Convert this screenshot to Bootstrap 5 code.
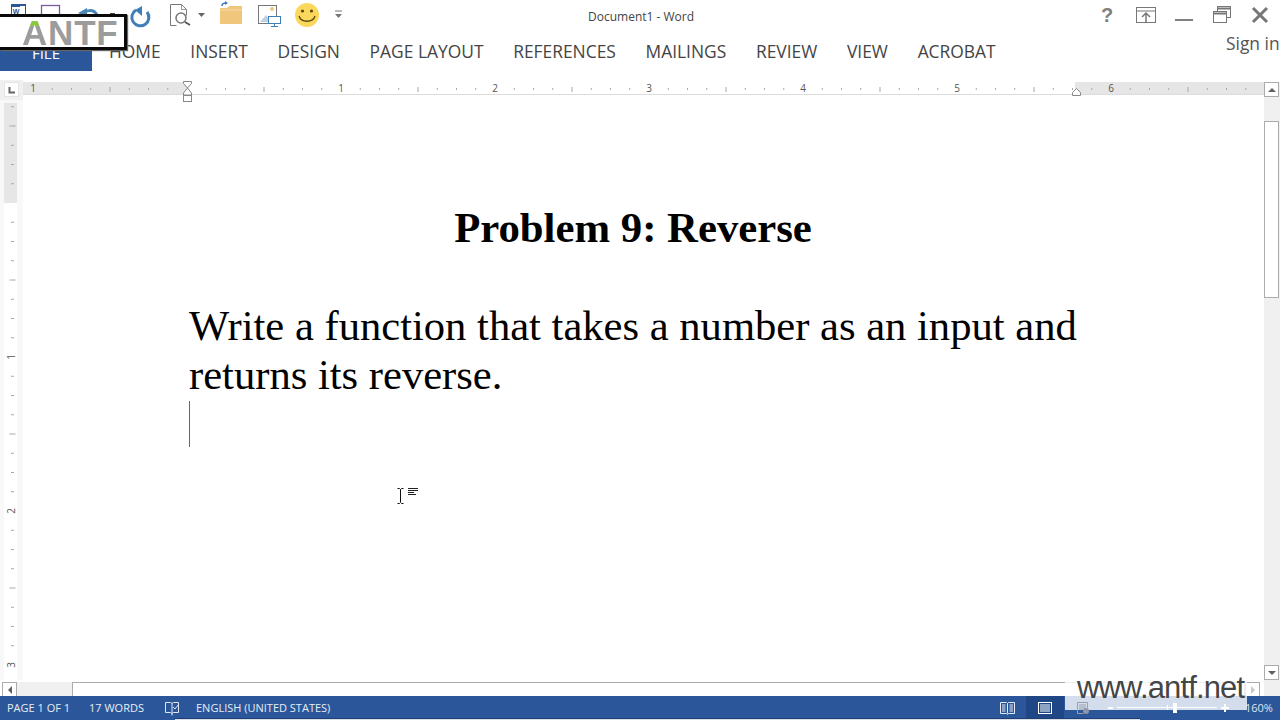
<!DOCTYPE html>
<html lang="en">
<head>
<meta charset="utf-8">
<title>Document1 - Word</title>
<link href="https://cdn.jsdelivr.net/npm/bootstrap@5.3.0/dist/css/bootstrap.min.css" rel="stylesheet">
<style>
html,body{height:720px;overflow:hidden}
body{width:1280px;font-family:"Open Sans","Liberation Sans",sans-serif;color:#444;background:#fff;position:relative}
.qat-row{height:32px}
.qat-ico{display:block;position:absolute;top:0}
.qat-wrap{position:relative;width:360px;height:32px}
.doc-title{font-size:12px;color:#444;left:588px;top:8px;line-height:17px;position:absolute}
.win-wrap{position:absolute;left:1090px;top:0;width:190px;height:32px}
.tab-row{height:39px;position:relative}
.file-tab{width:92px;height:39px;background:#2b579a;color:#fff;font-size:15px;line-height:43px;text-align:center;margin-right:17px}
.tab-item{font-size:17.4px;color:#444;margin-right:29.7px;line-height:38px;white-space:nowrap}
.signin{position:absolute;left:1226px;top:-1px;font-size:17.4px;color:#555;line-height:24px;white-space:nowrap}
.gap-strip{height:11px}
.main-area{height:614px}
.left-col{width:1264px}
.ruler-row{height:12px;position:relative;z-index:2}
.ruler-svg{display:block;position:absolute;left:0;top:-2px;overflow:visible}
.ruler-num{font:10px "Open Sans",sans-serif;fill:#555;text-anchor:middle}
.doc-row{height:586px}
.vruler-col{width:23px;background:#f8f8f8}
.page-col{padding:109px 0 0 166px;background:#fff}
.doc-text{width:888px;font-family:"Liberation Serif","Times New Roman",serif;line-height:49px;color:#000}
.doc-head{font-size:42.75px;font-weight:700;text-align:center;margin:0 0 49px;line-height:49px}
.doc-body{font-size:42.6px;margin:0;width:900px}
.caret-line{width:1px;height:46px;background:#666;margin-top:2px}
.vscroll-col{width:16px;background:#f0f0f0}
.scr-btn{flex:none;width:15px;height:15px;background:#fff;border:1px solid #ababab;display:flex;align-items:center;justify-content:center}
.tri-up{width:0;height:0;border:4px solid transparent;border-top:0;border-bottom:4px solid #606060}
.tri-down{width:0;height:0;border:4px solid transparent;border-bottom:0;border-top:4px solid #606060}
.tri-left{width:0;height:0;border:4px solid transparent;border-left:0;border-right:4px solid #606060}
.tri-right{width:0;height:0;border:4px solid transparent;border-right:0;border-left:4px solid #c8c8c8}
.vthumb{flex:none;width:15px;height:177px;background:#fff;border:1px solid #ababab;margin-top:24px}
.hscroll-row{height:16px;padding:2px 0 0 2px}
.htrack{flex:none;width:55px;height:15px;background:#f0f0f0}
.hthumb{flex:none;background:#fff;border:1px solid #ababab;height:15px;width:1173px}
.status-row{height:24px;background:#2b579a;color:#e8edf5;font-size:11px;position:relative}
.st-item{position:absolute;top:0;line-height:24px;white-space:nowrap}
.st-ico{position:absolute;top:0;display:block}
.st-active{position:absolute;left:1026px;top:0;width:38px;height:24px;background:#1f4785}
.watermark{position:absolute;left:1065px;top:677px;width:182px;height:33px;background:rgba(255,255,255,.8);z-index:4}
.watermark-text{position:absolute;left:1077px;top:669px;font-family:"Liberation Sans",sans-serif;font-size:31px;line-height:38px;color:#454545;letter-spacing:-.85px;z-index:5;white-space:nowrap}
.logo-box{position:absolute;left:0;top:14px;width:127px;height:36px;border:3px solid #0a0a0a;border-left:0;background:#fff;z-index:6;font-family:"Liberation Sans",sans-serif;font-size:35px;font-weight:700;line-height:31px;color:#9c9c9c;padding-left:22px;letter-spacing:.8px;white-space:nowrap;box-shadow:1px 1px 1px #666}
.logo-a{background:linear-gradient(#8cc63f 0 33%,#9c9c9c 33%);-webkit-background-clip:text;background-clip:text;color:transparent}
.ibeam{position:absolute;left:396px;top:488px;z-index:3;display:block}
.foot-strip{position:absolute;left:175px;top:718px;width:965px;height:2px;border-top:1px solid #1d3f75;background:#d8dde6;z-index:2}
</style>
</head>
<body>
<div class="qat-row position-relative">
  <div class="qat-wrap">
    <svg class="qat-ico" width="360" height="32" viewBox="0 0 360 32">
      <rect x="11" y="4" width="15" height="14" fill="#2b579a"/><rect x="20" y="6" width="5" height="10" fill="#fff"/><rect x="12" y="7" width="8" height="8" fill="#fff"/>
      <text x="16" y="14" font-family="Liberation Sans" font-size="7" font-weight="700" fill="#2b579a" text-anchor="middle">W</text>
      <rect x="41.500" y="5.500" width="18" height="12" fill="#fff" stroke="#7a5c9e" stroke-width="1.300"/>
      <path d="M82 16 C85 9 94 9 97 15" fill="none" stroke="#4a86b8" stroke-width="3"/><path d="M78 13l9-5v9z" fill="#4a86b8"/>
      <rect x="110" y="13" width="5" height="3" fill="#444"/>
      <path d="M136 10 A8.500 8.500 0 1 0 147 12" fill="none" stroke="#3f7fb5" stroke-width="3"/><path d="M142 6v10l-7-6z" fill="#3f7fb5"/>
      <path d="M170.500 25.500V4.500h11l5 5v6M170.500 25.500h6" fill="none" stroke="#777"/><path d="M181.500 4.500v5h5" fill="none" stroke="#999"/>
      <circle cx="181" cy="18" r="5" fill="#fff" stroke="#777" stroke-width="1.500"/><path d="M185 22l5 3" stroke="#555" stroke-width="2"/>
      <path d="M198 13h7l-3.500 4z" fill="#666"/>
      <path d="M220 24V8h7l2-2h13v18z" fill="#f0c67d"/><path d="M220 10h22" stroke="#f7dca8"/><path d="M222 6c0-2 2-3 4-3" fill="none" stroke="#3f7fb5" stroke-width="1.500"/><path d="M225 1l3 2-3 2z" fill="#3f7fb5"/>
      <rect x="258.500" y="5.500" width="18" height="18" fill="#fff" stroke="#777"/><path d="M260 22l6-7 5 7z" fill="#bcd0e6"/><circle cx="272" cy="9" r="2" fill="#f0c67d"/>
      <rect x="268.500" y="16.500" width="12" height="7" fill="#fff" stroke="#3f7fb5"/><path d="M274.500 24v2M271 26.500h7" stroke="#3f7fb5"/>
      <circle cx="307" cy="15" r="12" fill="#fbd75b"/><circle cx="302.500" cy="11" r="1.600" fill="#5a4a10"/><circle cx="311.500" cy="11" r="1.600" fill="#5a4a10"/><path d="M299 16c2 7 14 7 16 0" fill="none" stroke="#5a4a10" stroke-width="1.300"/>
      <path d="M335 11h7" stroke="#777"/><path d="M335 14h7l-3.500 4z" fill="#777"/>
    </svg>
  </div>
  <div class="doc-title">Document1 - Word</div>
  <div class="win-wrap">
    <svg class="qat-ico" width="190" height="32" viewBox="1090 0 190 32">
      <text x="1107" y="22" font-family="Liberation Sans" font-size="20" font-weight="700" fill="#808080" text-anchor="middle">?</text>
      <rect x="1136.500" y="7.500" width="19" height="15" fill="none" stroke="#777"/><path d="M1137 11h18" stroke="#777"/><path d="M1146 22v-9M1142 17l4-4 4 4" fill="none" stroke="#777" stroke-width="1.500"/>
      <rect x="1175" y="19" width="18" height="2" fill="#808080"/>
      <rect x="1217.500" y="6.500" width="13" height="11" fill="#fff" stroke="#777"/><path d="M1217 8.500h14" stroke="#777" stroke-width="2"/><rect x="1213.500" y="11.500" width="13" height="11" fill="#fff" stroke="#777"/><path d="M1213 13.500h14" stroke="#777" stroke-width="2"/>
      <path d="M1253 8l14 14M1267 8l-14 14" stroke="#777" stroke-width="3"/>
    </svg>
  </div>
</div>
<div class="tab-row d-flex align-items-start">
  <div class="file-tab">FILE</div>
  <div class="tab-item">HOME</div>
  <div class="tab-item">INSERT</div>
  <div class="tab-item">DESIGN</div>
  <div class="tab-item">PAGE LAYOUT</div>
  <div class="tab-item">REFERENCES</div>
  <div class="tab-item">MAILINGS</div>
  <div class="tab-item">REVIEW</div>
  <div class="tab-item">VIEW</div>
  <div class="tab-item">ACROBAT</div>
  <div class="signin">Sign in</div>
</div>
<div class="gap-strip"></div>
<div class="main-area d-flex">
  <div class="left-col d-flex flex-column">
    <div class="ruler-row">
      <svg class="ruler-svg" width="1264" height="22" viewBox="0 0 1264 22">
        <defs>
          <pattern id="hticks" x="187" y="0" width="154" height="22" patternUnits="userSpaceOnUse">
            <path d="M19.250 8v2M38.500 8v2M57.750 8v2M77 7v5M96.250 8v2M115.500 8v2M134.750 8v2" stroke="#a8a8a8"/>
          </pattern>
        </defs>
        <rect x="0" y="0" width="23" height="20" fill="#f0f0f0"/>
        <rect x="4.500" y="2.500" width="14" height="14" fill="#fff" stroke="#e4e4e4"/>
        <path d="M9.500 7v5.500H15" fill="none" stroke="#666" stroke-width="2"/>
        <rect x="23" y="2" width="164" height="12" fill="#e6e6e6"/>
        <rect x="187" y="2" width="888" height="12" fill="#fff"/>
        <rect x="1075" y="2" width="189" height="12" fill="#e6e6e6"/>
        <path d="M23 14.500h1241" stroke="#dcdcdc"/>
        <rect x="23" y="2" width="1241" height="12" fill="url(#hticks)"/>
        <text class="ruler-num" x="33" y="12">1</text>
        <text class="ruler-num" x="341" y="12">1</text>
        <text class="ruler-num" x="495" y="12">2</text>
        <text class="ruler-num" x="649" y="12">3</text>
        <text class="ruler-num" x="803" y="12">4</text>
        <text class="ruler-num" x="957" y="12">5</text>
        <text class="ruler-num" x="1111" y="12">6</text>
        <path d="M183.500 1.500h8v2l-4 4.500-4-4.500zM187.500 8l4 5v2h-8v-2z" fill="#fff" stroke="#888"/>
        <rect x="183.500" y="15.500" width="8" height="6" fill="#fff" stroke="#888"/>
        <path d="M1076.500 8.500l4 4v3h-8v-3z" fill="#fff" stroke="#888"/>
      </svg>
    </div>
    <div class="doc-row d-flex flex-shrink-0">
      <div class="vruler-col">
        <svg class="d-block" width="23" height="586" viewBox="0 94 23 586">
          <defs>
            <pattern id="vticks" x="0" y="203" width="23" height="154" patternUnits="userSpaceOnUse">
              <path d="M11 19.250h3M11 38.500h3M11 57.750h3M9.500 77h6M11 96.250h3M11 115.500h3M11 134.750h3" stroke="#a8a8a8"/>
            </pattern>
          </defs>
          <rect x="4" y="103" width="13" height="100" fill="#e6e6e6"/>
          <rect x="4" y="203" width="13" height="477" fill="#fff"/>
          <rect x="4" y="103" width="13" height="577" fill="url(#vticks)"/>
          <text class="ruler-num" transform="translate(15 357) rotate(-90)">1</text>
          <text class="ruler-num" transform="translate(15 511) rotate(-90)">2</text>
          <text class="ruler-num" transform="translate(15 665) rotate(-90)">3</text>
        </svg>
      </div>
      <div class="page-col flex-grow-1">
        <div class="doc-text">
          <h1 class="doc-head">Problem 9: Reverse</h1>
          <p class="doc-body">Write a function that takes a number as an input and returns its reverse.</p>
          <div class="caret-line"></div>
        </div>
      </div>
    </div>
    <div class="hscroll-row d-flex">
      <div class="scr-btn"><span class="tri-left"></span></div>
      <div class="htrack"></div>
      <div class="hthumb"></div>
      <div class="scr-btn"><span class="tri-right"></span></div>
    </div>
  </div>
  <div class="vscroll-col d-flex flex-column">
    <div class="scr-btn"><span class="tri-up"></span></div>
    <div class="vthumb"></div>
    <div class="flex-grow-1"></div>
    <div class="scr-btn mb-3"><span class="tri-down"></span></div>
  </div>
</div>
<div class="status-row">
  <span class="st-item" style="left:7px">PAGE 1 OF 1</span>
  <span class="st-item" style="left:89px">17 WORDS</span>
  <svg class="st-ico" style="left:164px" width="16" height="24" viewBox="0 0 16 24"><path d="M1.500 6.500h5l1.500 1 1.500-1h5v10h-5l-1.500 1-1.500-1h-5zM8 7.500v12" fill="none" stroke="#dfe6f1"/><path d="M9 11l2 2 3.500-4.500" fill="none" stroke="#dfe6f1"/></svg>
  <span class="st-item" style="left:196px">ENGLISH (UNITED STATES)</span>
  <div class="st-active"></div>
  <svg class="st-ico" style="left:1000px" width="280" height="24" viewBox="1000 0 280 24">
    <path d="M1000.500 6.500h6l1 1 1-1h6v11h-6l-1 1-1-1h-6zM1007.500 7.500v10M1002 9h3.500M1002 11h3.500M1002 13h3.500M1002 15h3.500M1009.500 9h3.500M1009.500 11h3.500M1009.500 13h3.500M1009.500 15h3.500" fill="none" stroke="#e6ecf5"/>
    <rect x="1038.500" y="6.500" width="13" height="11" fill="none" stroke="#fff"/><path d="M1040 9h10M1040 11h10M1040 13h10M1040 15h10" stroke="#fff"/>
  </svg>
  <span class="st-item" style="left:1245px;color:#dfe6f1">160%</span>
</div>
<div class="watermark"></div>
<div class="watermark-text">www.antf.net</div>
<svg class="st-ico" style="left:1070px;top:696px;z-index:5" width="165" height="24" viewBox="1070 0 165 24">
  <path d="M1087.500 12V6.500h-10v11h6M1079 9h7M1079 11h7M1079 13h5" fill="none" stroke="#9aa0ad"/><circle cx="1086" cy="15" r="3" fill="#8d95a8"/>
  <rect x="1108" y="11" width="5" height="2" fill="#fff"/>
  <rect x="1117" y="11" width="100" height="1" fill="#fff"/><rect x="1167" y="9" width="1" height="5" fill="#fff"/>
  <rect x="1173" y="7" width="4" height="10" fill="#fff"/>
  <path d="M1225 8v8M1221 12h8" stroke="#fff" stroke-width="2"/>
</svg>
<div class="logo-box"><span class="logo-a">A</span>NTF</div>
<svg class="ibeam" width="24" height="16" viewBox="396 488 24 16">
  <path d="M397.500 488.500h2l1 1 1-1h2M397.500 503.500h2l1-1 1 1h2M400.500 489v13" fill="none" stroke="#111"/>
  <path d="M408 488.500h10M408 490.500h10M408 492.500h6M408 494.500h8" stroke="#222"/>
</svg>
<div class="foot-strip"></div>
</body>
</html>
